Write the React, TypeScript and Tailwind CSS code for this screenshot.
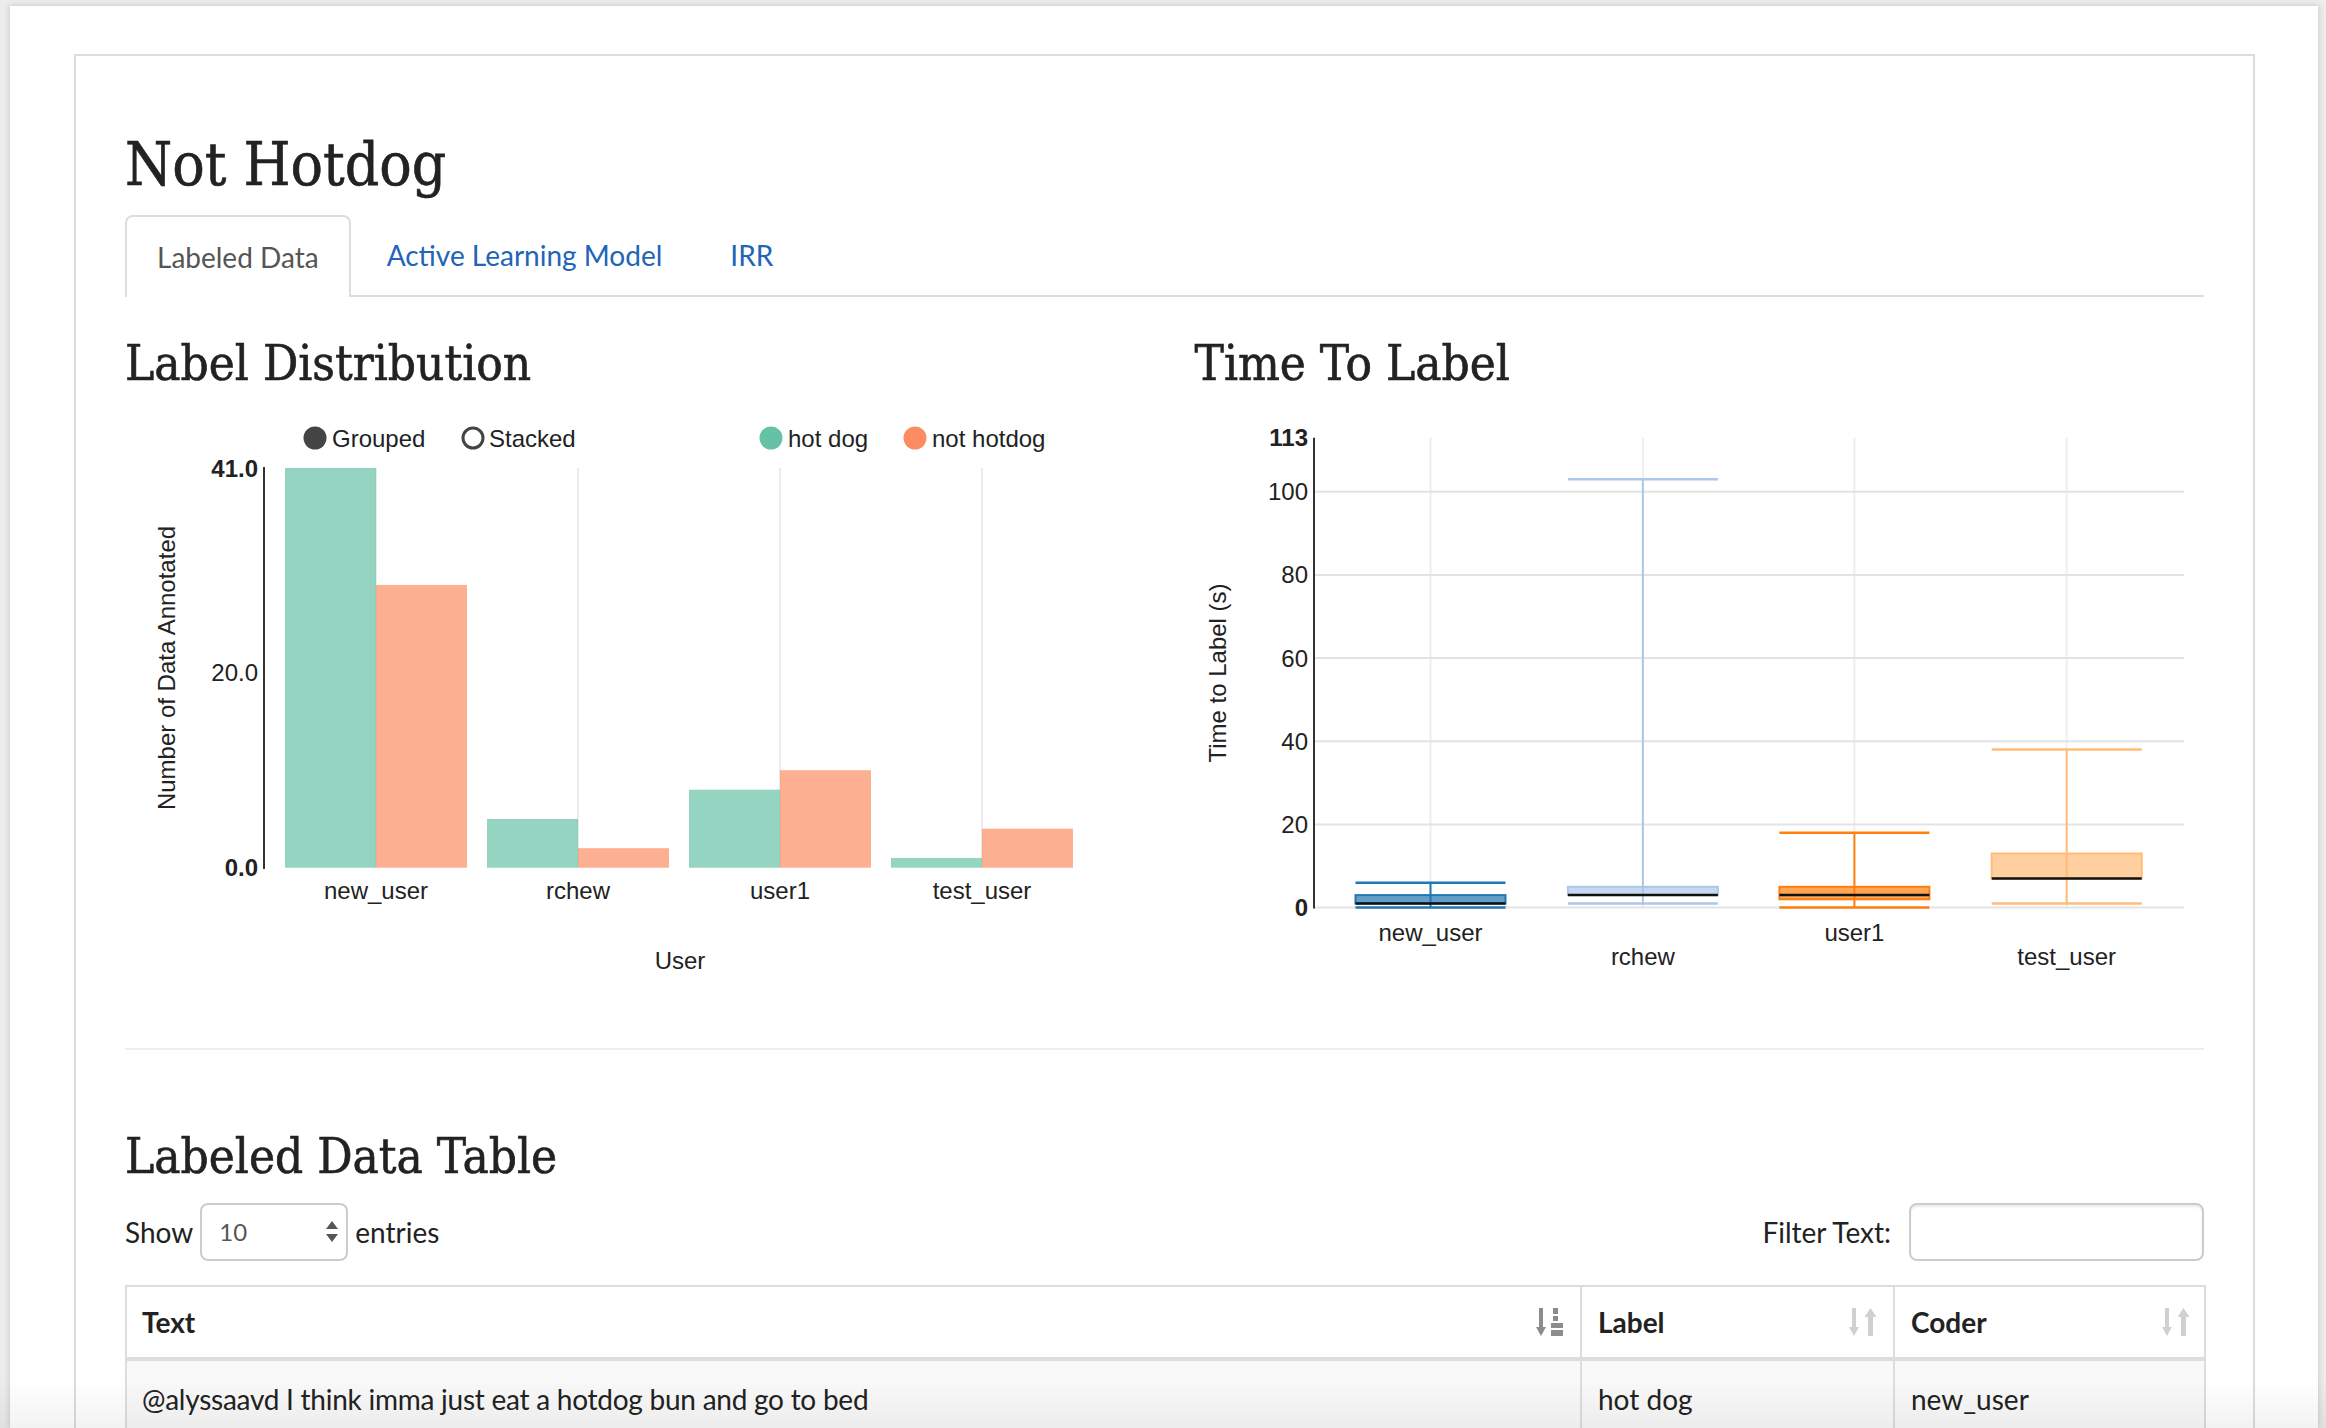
import React from "react";

const CF = "'Liberation Sans', Arial, sans-serif";

function LabelDistChart() {
  const zeroY = 479.7;
  const per = 9.751;
  const groups = [
    { name: "new_user", hd: 41, nh: 29 },
    { name: "rchew", hd: 5, nh: 2 },
    { name: "user1", hd: 8, nh: 10 },
    { name: "test_user", hd: 1, nh: 4 },
  ];
  return (
    <svg width={1009} height={600} viewBox="0 0 1009 600" fontFamily={CF} fontSize={24} fill="#222" className="block">
      {groups.map((g, i) => {
        const x0 = 160 + i * 202;
        return <line key={"g" + i} x1={x0 + 91} x2={x0 + 91} y1={80} y2={zeroY} stroke="#ebebeb" strokeWidth={2} />;
      })}
      {groups.map((g, i) => {
        const x0 = 160 + i * 202;
        return (
          <g key={"b" + i}>
            <rect x={x0} y={zeroY - g.hd * per} width={91} height={g.hd * per} fill="#66c2a5" fillOpacity={0.7} />
            <rect x={x0 + 91} y={zeroY - g.nh * per} width={91} height={g.nh * per} fill="#fc8d62" fillOpacity={0.7} />
            <text x={x0 + 91} y={511} textAnchor="middle">{g.name}</text>
          </g>
        );
      })}
      <line x1={139} x2={139} y1={79} y2={481} stroke="#333" strokeWidth={2} />
      <text x={133} y={80} textAnchor="end" dominantBaseline="central" fontWeight="bold">41.0</text>
      <text x={133} y={zeroY - 20 * per} textAnchor="end" dominantBaseline="central">20.0</text>
      <text x={133} y={zeroY} textAnchor="end" dominantBaseline="central" fontWeight="bold">0.0</text>
      <text x={555} y={581} textAnchor="middle">User</text>
      <text x={41} y={280} textAnchor="middle" dominantBaseline="central" transform="rotate(-90 41 280)">Number of Data Annotated</text>
      {/* legend */}
      <circle cx={190} cy={50} r={11.5} fill="#444" />
      <text x={207} y={50} dominantBaseline="central">Grouped</text>
      <circle cx={348} cy={50} r={10} fill="#fff" stroke="#444" strokeWidth={3} />
      <text x={364} y={50} dominantBaseline="central">Stacked</text>
      <circle cx={646} cy={50} r={11.5} fill="#66c2a5" />
      <text x={663} y={50} dominantBaseline="central">hot dog</text>
      <circle cx={790} cy={50} r={11.5} fill="#fc8d62" />
      <text x={807} y={50} dominantBaseline="central">not hotdog</text>
    </svg>
  );
}

function TimeChart() {
  const y = (v: number) => 519.6 - 4.159 * v;
  const cols = [235.5, 447.9, 659.4, 871.7];
  const boxes = [
    { name: "new_user", c: "#1f77b4", lo: 0, q1: 1, med: 1, q3: 3, hi: 6, ly: 553 },
    { name: "rchew", c: "#aec7e8", lo: 1, q1: 3, med: 3, q3: 5, hi: 103, ly: 577 },
    { name: "user1", c: "#ff7f0e", lo: 0, q1: 2, med: 3, q3: 5, hi: 18, ly: 553 },
    { name: "test_user", c: "#ffbb78", lo: 1, q1: 7, med: 7, q3: 13, hi: 38, ly: 577 },
  ];
  const ticks = [0, 20, 40, 60, 80, 100];
  return (
    <svg width={1009} height={600} viewBox="0 0 1009 600" fontFamily={CF} fontSize={24} fill="#222" className="block">
      {cols.map((x, i) => (
        <line key={"v" + i} x1={x} x2={x} y1={y(113)} y2={y(0)} stroke="#eeeeee" strokeWidth={2} />
      ))}
      {ticks.map((t) => (
        <line key={"h" + t} x1={119} x2={989} y1={y(t)} y2={y(t)} stroke="#e3e3e3" strokeWidth={2} />
      ))}
      {boxes.map((b, i) => {
        const cx = cols[i];
        const x0 = cx - 75;
        return (
          <g key={b.name}>
            <line x1={cx} x2={cx} y1={y(b.hi)} y2={y(b.lo)} stroke={b.c} strokeWidth={2} />
            <line x1={x0} x2={x0 + 150} y1={y(b.hi)} y2={y(b.hi)} stroke={b.c} strokeWidth={2.5} />
            <line x1={x0} x2={x0 + 150} y1={y(b.lo)} y2={y(b.lo)} stroke={b.c} strokeWidth={2.5} />
            <rect x={x0} y={y(b.q3)} width={150} height={y(b.q1) - y(b.q3)} fill={b.c} fillOpacity={0.7} stroke={b.c} strokeWidth={2} />
            <line x1={x0} x2={x0 + 150} y1={y(b.med)} y2={y(b.med)} stroke="#111" strokeWidth={2.5} />
            <text x={cx} y={b.ly} textAnchor="middle">{b.name}</text>
          </g>
        );
      })}
      <line x1={119} x2={119} y1={y(113)} y2={y(0) + 1} stroke="#333" strokeWidth={2} />
      <text x={113} y={y(113)} textAnchor="end" dominantBaseline="central" fontWeight="bold">113</text>
      {ticks.map((t) => (
        <text key={"t" + t} x={113} y={y(t)} textAnchor="end" dominantBaseline="central" fontWeight={t === 0 ? "bold" : "normal"}>
          {t}
        </text>
      ))}
      <text x={22} y={285} textAnchor="middle" dominantBaseline="central" transform="rotate(-90 22 285)">Time to Label (s)</text>
    </svg>
  );
}

const SortBoth = () => (
  <svg width="28" height="28" viewBox="0 0 28 28" fill="#d0d0d0">
    <rect x="3" y="0" width="4" height="21" />
    <polygon points="0,19 10,19 5,28" />
    <rect x="19" y="7" width="5" height="21" />
    <polygon points="15.5,9 27.5,9 21.5,0" />
  </svg>
);

const SortAttr = () => (
  <svg width="28" height="28" viewBox="0 0 28 28" fill="#8c8c8c">
    <rect x="3" y="0" width="4" height="21" />
    <polygon points="0,19 10,19 5,28" />
    <rect x="17" y="0" width="5" height="6" />
    <rect x="17" y="8" width="5" height="5" />
    <rect x="15" y="15" width="12" height="5" />
    <rect x="15" y="22" width="12" height="6" />
  </svg>
);

const headingFont = "font-['DejaVu_Serif_Condensed','DejaVu_Serif',serif] [-webkit-text-stroke:0.6px_#222]";

export default function App() {
  return (
    <div className="relative w-[2326px] h-[1428px] overflow-hidden bg-[#ececec] pt-[6px] pl-[10px] pr-[8px] font-['Lato',sans-serif] text-[#222]">
      <div className="h-full bg-white pl-[64px] pr-[63px] pt-[48px] shadow-[0_0_6px_rgba(0,0,0,0.18)]">
        <div className="h-full border-2 border-b-0 border-[#dcdcdc] px-[49px]">
          <h1 className={`mt-[78px] h-[60px] text-[60px] leading-none text-[#222] ${headingFont}`}>Not Hotdog</h1>

          <div className="mt-[21px] flex h-[82px] border-b-2 border-[#dddddd]">
            <div className="-mb-[2px] mr-[4px] flex h-[82px] items-center rounded-t-[8px] border-2 border-b-0 border-[#dddddd] bg-white px-[30px] text-[28px] text-[#555]">
              Labeled Data
            </div>
            <div className="mr-[4px] flex h-[80px] items-center border-2 border-transparent px-[30px] text-[28px] text-[#2164b8]">
              Active Learning Model
            </div>
            <div className="mr-[4px] flex h-[80px] items-center border-2 border-transparent px-[30px] text-[28px] text-[#2164b8]">
              IRR
            </div>
          </div>

          <div className="grid grid-cols-2 gap-x-[60px]">
            <div>
              <h2 className={`mt-[42px] h-[49px] text-[49px] leading-none ${headingFont}`}>Label Distribution</h2>
              <LabelDistChart />
            </div>
            <div>
              <h2 className={`mt-[42px] h-[49px] text-[49px] leading-none ${headingFont}`}>Time To Label</h2>
              <TimeChart />
            </div>
          </div>

          <div className="mt-[60px] h-0 border-t-2 border-[#eeeeee]" />

          <h2 className={`mt-[82px] h-[49px] text-[49px] leading-none ${headingFont}`}>Labeled Data Table</h2>

          <div className="mt-[22px] flex h-[58px] items-center justify-between text-[28px]">
            <div className="flex items-center gap-[7px]">
              <span>Show</span>
              <div className="flex h-[58px] w-[148px] items-center justify-between rounded-[8px] border-2 border-[#cccccc] pl-[17px] pr-[8px] text-[24px] text-[#555]">
                <span>10</span>
                <svg width="12" height="22" viewBox="0 0 12 22" fill="#555">
                  <polygon points="0,8 12,8 6,0" />
                  <polygon points="0,13 12,13 6,21" />
                </svg>
              </div>
              <span>entries</span>
            </div>
            <div className="flex items-center gap-[18px]">
              <span>Filter Text:</span>
              <div className="h-[58px] w-[295px] rounded-[8px] border-2 border-[#cccccc] shadow-[inset_0_2px_2px_rgba(0,0,0,0.075)]" />
            </div>
          </div>

          <div className="mt-[24px] w-[2081px] border-t-2 border-[#dddddd] text-[28px]">
            <div className="flex h-[74px] border-b-4 border-[#dddddd] font-bold">
              <div className="flex w-[1455px] items-center justify-between border-l-2 border-[#dddddd] pl-[15px] pr-[16px]">
                <span>Text</span>
                <SortAttr />
              </div>
              <div className="flex w-[313px] items-center justify-between border-l-2 border-[#dddddd] pl-[16px] pr-[16px]">
                <span>Label</span>
                <SortBoth />
              </div>
              <div className="flex w-[313px] items-center justify-between border-x-2 border-[#dddddd] pl-[16px] pr-[14px]">
                <span>Coder</span>
                <SortBoth />
              </div>
            </div>
            <div className="flex h-[75px] bg-[#f9f9f9]">
              <div className="flex w-[1455px] items-center border-l-2 border-[#dddddd] pl-[15px] tracking-[-0.25px]">
                @alyssaavd I think imma just eat a hotdog bun and go to bed
              </div>
              <div className="flex w-[313px] items-center border-l-2 border-[#dddddd] pl-[16px]">hot dog</div>
              <div className="flex w-[313px] items-center border-x-2 border-[#dddddd] pl-[16px]">new_user</div>
            </div>
          </div>
        </div>
      </div>
      <div className="pointer-events-none absolute bottom-0 left-0 right-0 h-[50px] bg-linear-to-b from-transparent to-black/5" />
    </div>
  );
}
